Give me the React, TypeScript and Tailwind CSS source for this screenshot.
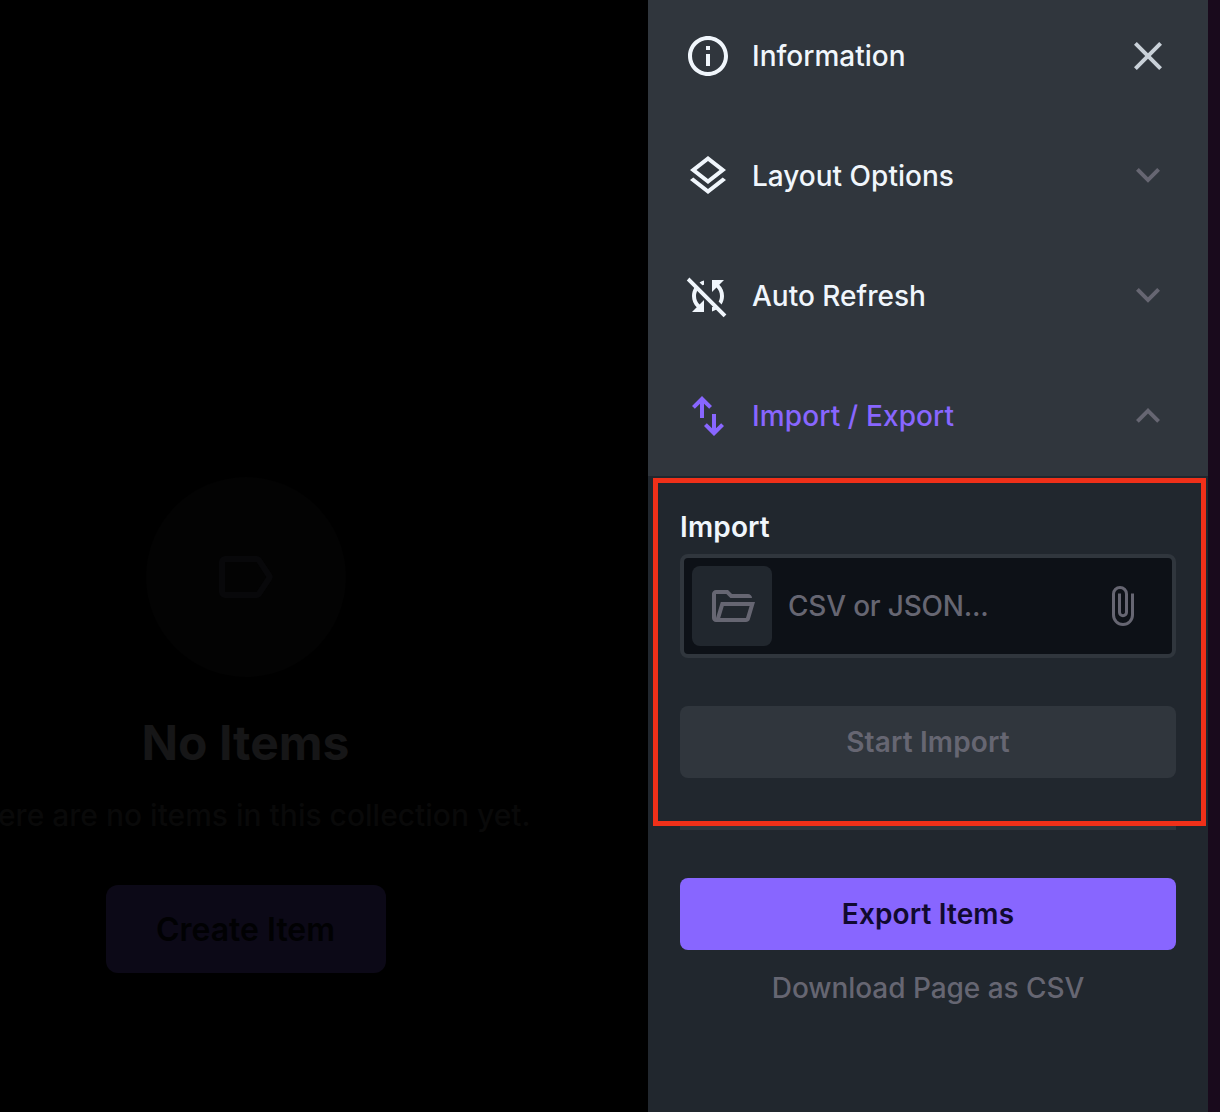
import type { ReactNode } from "react";

function Icon({ children, className = "size-12" }: { children: ReactNode; className?: string }) {
  return (
    <svg viewBox="0 0 24 24" fill="currentColor" className={`shrink-0 ${className}`} aria-hidden="true">
      {children}
    </svg>
  );
}

const chevronDown = <path d="m12 15.4-6-6L7.4 8l4.6 4.6L16.6 8 18 9.4z" />;
const chevronUp = <path d="M7.4 15.4 6 14l6-6 6 6-1.4 1.4-4.6-4.6z" />;

const infoIcon = (
  <path d="M11 7h2v2h-2zm0 4h2v6h-2zm1-9C6.48 2 2 6.48 2 12s4.48 10 10 10 10-4.48 10-10S17.52 2 12 2zm0 18c-4.41 0-8-3.59-8-8s3.59-8 8-8 8 3.59 8 8-3.59 8-8 8z" />
);
const layersIcon = (
  <path d="m12 21.05-9-7 1.65-1.25L12 18.5l7.35-5.7L21 14.05zM12 16 3 9l9-7 9 7zm0-2.55L17.75 9 12 4.55 6.25 9z" />
);
const syncOffIcon = (
  <>
    <path d="M2.7 2.8 21.2 21.2l-1.4 1.4L1.4 4.2z" />
    <path d="M10 6.35V4.26c-.8.21-1.55.54-2.23.96l1.46 1.46c.25-.12.5-.24.77-.33z" />
    <path d="M5.22 7.77C4.45 8.99 4 10.44 4 12c0 2.21.91 4.2 2.36 5.64L4 20h6v-6l-2.24 2.24C6.68 15.15 6 13.66 6 12c0-1 .25-1.94.68-2.77z" />
    <path d="M14 19.74c.8-.21 1.55-.54 2.23-.96l-1.47-1.47c-.25.13-.5.25-.76.34z" />
    <path d="M20 4h-6v6l2.24-2.24C17.32 8.85 18 10.34 18 12c0 1-.25 1.94-.68 2.77l1.46 1.46C19.55 15.01 20 13.56 20 12c0-2.21-.91-4.2-2.36-5.64z" />
  </>
);
const importExportIcon = (
  <path d="M8 13V5.825L5.425 8.4 4 7l5-5 5 5-1.4 1.4L10 5.825V13zm7 9-5-5 1.4-1.4 2.6 2.575V11h2v7.175L18.575 15.6 20 17z" />
);

function DetailRow({
  icon,
  title,
  trailing,
  className = "text-[#f0f6fc]",
}: {
  icon: ReactNode;
  title: string;
  trailing: ReactNode;
  className?: string;
}) {
  return (
    <div className={`flex h-[120px] items-center pr-9 pl-9 ${className}`}>
      <Icon>{icon}</Icon>
      <span className="ml-5 flex-1 text-[28px] leading-10 font-medium">{title}</span>
      {trailing}
    </div>
  );
}

function EmptyState() {
  return (
    <main className="flex w-[648px] shrink-0 overflow-hidden bg-black pt-[477px]">
      <div className="-ml-[154.5px] flex w-[800px] shrink-0 flex-col items-center">
        <div className="flex size-[200px] items-center justify-center rounded-full bg-[#030303] text-[#08080a]">
          <Icon className="size-[72px]">
            <path d="M5 19q-.825 0-1.412-.587T3 17V7q0-.825.588-1.412T5 5h10.5q.475 0 .9.213t.7.587l3.5 5.3q.3.45.3.9t-.3.9l-3.5 5.3q-.275.375-.7.588t-.9.212zm0-2h10.5l3.3-5-3.3-5H5z" />
          </Icon>
        </div>
        <h1 className="mt-8 text-[48px] leading-[68px] font-bold text-[#161617]">No Items</h1>
        <p className="mt-4 text-[30px] leading-[45px] font-medium whitespace-nowrap text-[#090909]">
          There are no items in this collection yet.
        </p>
        <button className="mt-[47px] h-[88px] w-[280px] rounded-xl bg-[#0c0917] pt-0.5 text-[32px] font-semibold text-[#010103]">
          Create Item
        </button>
      </div>
    </main>
  );
}

export default function App() {
  return (
    <div className="relative flex h-[1112px] w-[1220px] overflow-hidden bg-[#190a1c] font-['Inter',sans-serif]">
      <EmptyState />

      <aside className="flex w-[560px] shrink-0 flex-col bg-[#30363d]">
        <div className="-mt-1">
          <DetailRow
            icon={infoIcon}
            title="Information"
            trailing={
              <Icon className="size-12 text-[#c9d1d9]">
                <path d="M6.4 19 5 17.6l5.6-5.6L5 6.4 6.4 5l5.6 5.6L17.6 5 19 6.4 13.4 12l5.6 5.6-1.4 1.4-5.6-5.6z" />
              </Icon>
            }
          />
          <DetailRow
            icon={layersIcon}
            title="Layout Options"
            trailing={<Icon className="size-12 text-[#666672]">{chevronDown}</Icon>}
          />
          <DetailRow
            icon={syncOffIcon}
            title="Auto Refresh"
            trailing={<Icon className="size-12 text-[#666672]">{chevronDown}</Icon>}
          />
          <DetailRow
            icon={importExportIcon}
            title="Import / Export"
            className="tracking-[0.12px] text-[#8866ff]"
            trailing={<Icon className="size-12 text-[#666672]">{chevronUp}</Icon>}
          />
        </div>

        <section className="flex flex-1 flex-col bg-[#21272e] px-8 pt-[31px]">
          <h2 className="text-[28px] leading-10 font-semibold tracking-[0.15px] text-[#f0f6fc]">Import</h2>
          <div className="mt-[7px] flex h-[104px] items-center rounded-lg border-4 border-[#30363d] bg-[#0d1117] px-2 text-[#666672]">
            <div className="flex size-20 items-center justify-center rounded-lg bg-[#21272e]">
              <Icon>
                <path d="M4 20q-.825 0-1.412-.587T2 18V6q0-.825.588-1.412T4 4h6l2 2h8q.825 0 1.413.588T22 8H11.175l-2-2H4v12l2.4-8h17.1l-2.575 8.575q-.2.65-.737 1.038T19 20zm2.1-2H19l1.8-6H7.9z" />
              </Icon>
            </div>
            <span className="ml-4 flex-1 text-[28px] leading-10 font-medium tracking-[-0.2px]">CSV or JSON...</span>
            <Icon className="mr-[18px] size-12">
              <path
                d="M17.25 5.75V16.5a4.75 4.75 0 0 1-9.5 0V6a3.25 3.25 0 0 1 6.5 0v9.1a1.75 1.75 0 0 1-3.5 0V5.75"
                fill="none"
                stroke="currentColor"
                strokeWidth="1.5"
              />
            </Icon>
          </div>
          <button className="mt-12 h-[72px] rounded-lg bg-[#30363d] text-[28px] font-semibold tracking-[0.15px] text-[#666672]">
            Start Import
          </button>
          <hr className="mt-12 border-t-4 border-[#30363d]" />
          <button className="mt-12 h-[72px] rounded-lg bg-[#8866ff] text-[28px] font-semibold tracking-[0.12px] text-[#110a30]">
            Export Items
          </button>
          <p className="mt-[18px] text-center text-[28px] leading-10 font-medium tracking-[-0.05px] text-[#666672]">
            Download Page as CSV
          </p>
        </section>
      </aside>

      <div className="pointer-events-none absolute top-[478px] left-[653px] h-[348px] w-[553px] border-5 border-[#f03019]" />
    </div>
  );
}
